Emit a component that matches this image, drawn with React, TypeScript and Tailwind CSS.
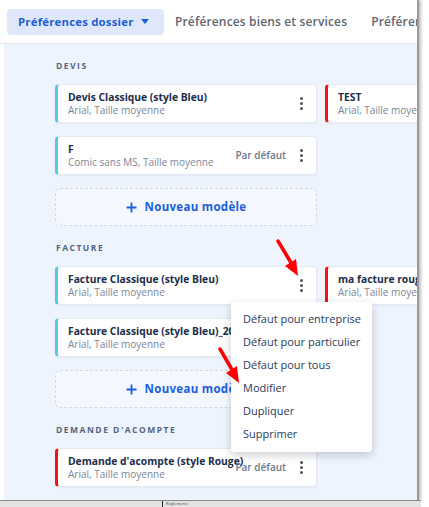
import React from 'react';

const font = { fontFamily: '"Open Sans", "Noto Sans", sans-serif' };

interface Model {
  title: string;
  sub: string;
  color: 'blue' | 'red';
  isDefault?: boolean;
  kebab?: boolean;
}

function Kebab() {
  return (
    <div className="flex flex-col items-center gap-[2px] w-[6px]">
      <span className="w-[3px] h-[3px] rounded-full bg-[#4f5560]" />
      <span className="w-[3px] h-[3px] rounded-full bg-[#4f5560]" />
      <span className="w-[3px] h-[3px] rounded-full bg-[#4f5560]" />
    </div>
  );
}

function Card({ m }: { m: Model }) {
  return (
    <div
      className={`h-[39px] w-[262px] bg-white rounded-[4px] border border-[#e4e9f0] border-l-[3px] shadow-[0_1px_2px_rgba(30,50,90,0.06)] flex items-center pl-[10px] pr-[12px] ${
        m.color === 'blue' ? 'border-l-[#5cc6ea]' : 'border-l-[#f01414]'
      }`}
    >
      <div className="flex-1 min-w-0 flex flex-col">
        <span className="text-[10.3px] leading-[14px] font-bold text-[#1c2d4a] whitespace-nowrap">
          {m.title}
        </span>
        <span className="text-[10px] leading-[13px] text-[#7c8699] whitespace-nowrap">
          {m.sub}
        </span>
      </div>
      {m.isDefault && (
        <span className="text-[10px] font-semibold text-[#6d7790] mr-[12px] whitespace-nowrap">Par défaut</span>
      )}
      {m.kebab !== false && <Kebab />}
    </div>
  );
}

function NewModel() {
  return (
    <div className="h-[38px] w-[262px] rounded-[5px] border border-dashed border-[#d2d9e4] bg-[#f4f8fe] flex items-center justify-center gap-[8px] text-[#1a5ee0] font-bold text-[11.5px] tracking-[0.3px]">
      <svg width="11" height="11" viewBox="0 0 11 11">
        <path d="M5.5 0.5v10M0.5 5.5h10" stroke="#1a5ee0" strokeWidth="1.8" />
      </svg>
      Nouveau modèle
    </div>
  );
}

function Section({ label, left, right }: { label: string; left: Model[]; right: Model[] }) {
  return (
    <div className="flex flex-col">
      <div className="h-[12px] text-[8.5px] leading-[12px] font-bold tracking-[1.5px] text-[#56657e] mb-[12px] pl-[1px]">{label}</div>
      <div className="flex gap-[8px]">
        <div className="flex flex-col gap-[13px] shrink-0">
          {left.map((m) => (
            <Card key={m.title} m={m} />
          ))}
          <NewModel />
        </div>
        <div className="flex flex-col gap-[13px] shrink-0">
          {right.map((m) => (
            <Card key={m.title} m={m} />
          ))}
        </div>
      </div>
    </div>
  );
}

const menu = ['Défaut pour entreprise', 'Défaut pour particulier', 'Défaut pour tous', 'Modifier', 'Dupliquer', 'Supprimer'];

export default function App() {
  return (
    <div className="w-[429px] h-[507px] bg-white relative overflow-hidden" style={font}>
      <div className="w-[419px] h-[500px] relative overflow-hidden border-r-[2px] border-[#9a9a9a] shadow-[2px_0_3px_rgba(0,0,0,0.25)]">
        {/* tabs */}
        <div className="h-[44px] bg-white border-b border-[#e6e9ee] flex items-center pl-[7px] gap-[11px] whitespace-nowrap">
          <div className="h-[26px] w-[157px] shrink-0 pl-[11px] rounded-[4px] bg-[#dfe8fb] flex items-center gap-[7px] text-[11.4px] font-bold text-[#1f5ed6] tracking-[0.2px]">
            Préférences dossier
            <svg width="8" height="5" viewBox="0 0 8 5">
              <path d="M0 0h8L4 5z" fill="#1f5ed6" />
            </svg>
          </div>
          <div className="shrink-0 text-[12px] font-semibold text-[#606670] tracking-[0.15px]">Préférences biens et services</div>
          <div className="shrink-0 pl-[13px] text-[12px] font-semibold text-[#606670] tracking-[0.15px]">Préférences</div>
        </div>
        {/* content */}
        <div className="ml-[4px] h-[456px] bg-[#eef4fd] pl-[51px] pt-[16px] flex flex-col gap-[16px] overflow-hidden">
          <Section
            label="DEVIS"
            left={[
              { title: 'Devis Classique (style Bleu)', sub: 'Arial, Taille moyenne', color: 'blue' },
              { title: 'F', sub: 'Comic sans MS, Taille moyenne', color: 'blue', isDefault: true },
            ]}
            right={[{ title: 'TEST', sub: 'Arial, Taille moyenne', color: 'red' }]}
          />
          <Section
            label="FACTURE"
            left={[
              { title: 'Facture Classique (style Bleu)', sub: 'Arial, Taille moyenne', color: 'blue' },
              { title: 'Facture Classique (style Bleu)_2023', sub: 'Arial, Taille moyenne', color: 'blue', kebab: false },
            ]}
            right={[{ title: 'ma facture rouge', sub: 'Arial, Taille moyenne', color: 'red' }]}
          />
          <Section
            label="DEMANDE D'ACOMPTE"
            left={[
              { title: "Demande d'acompte (style Rouge)", sub: 'Arial, Taille moyenne', color: 'red', isDefault: true },
            ]}
            right={[]}
          />
        </div>

        {/* dropdown menu */}
        <div className="absolute left-[231px] top-[302px] w-[141px] bg-white rounded-[4px] shadow-[0_3px_10px_rgba(20,30,60,0.22)] py-[6px]">
          {menu.map((item) => (
            <div key={item} className="h-[23px] flex items-center px-[12px] text-[11px] text-[#283a5c] whitespace-nowrap">
              {item}
            </div>
          ))}
        </div>

        {/* red annotation arrows */}
        <svg className="absolute left-0 top-0 pointer-events-none" width="418" height="500">
          <path d="M278 241 L293 266" stroke="#ff0000" strokeWidth="3.5" strokeLinecap="round" />
          <path d="M298 276 L285 266 L296 259 Z" fill="#ff0000" />
          <path d="M220 349 L234 373" stroke="#ff0000" strokeWidth="3.5" strokeLinecap="round" />
          <path d="M239 383 L226 373 L237 366 Z" fill="#ff0000" />
        </svg>
      </div>
      {/* bottom strip of the window behind */}
      <div className="h-[7px] w-[421px] bg-[#e3e3e3] border-t border-[#8a8a8a] relative">
        <div className="absolute left-[162px] top-0 h-[6px] w-[44px] border-l border-[#222] text-[4px] leading-[6px] pl-[3px] text-[#444]">Règlements</div>
      </div>
    </div>
  );
}
